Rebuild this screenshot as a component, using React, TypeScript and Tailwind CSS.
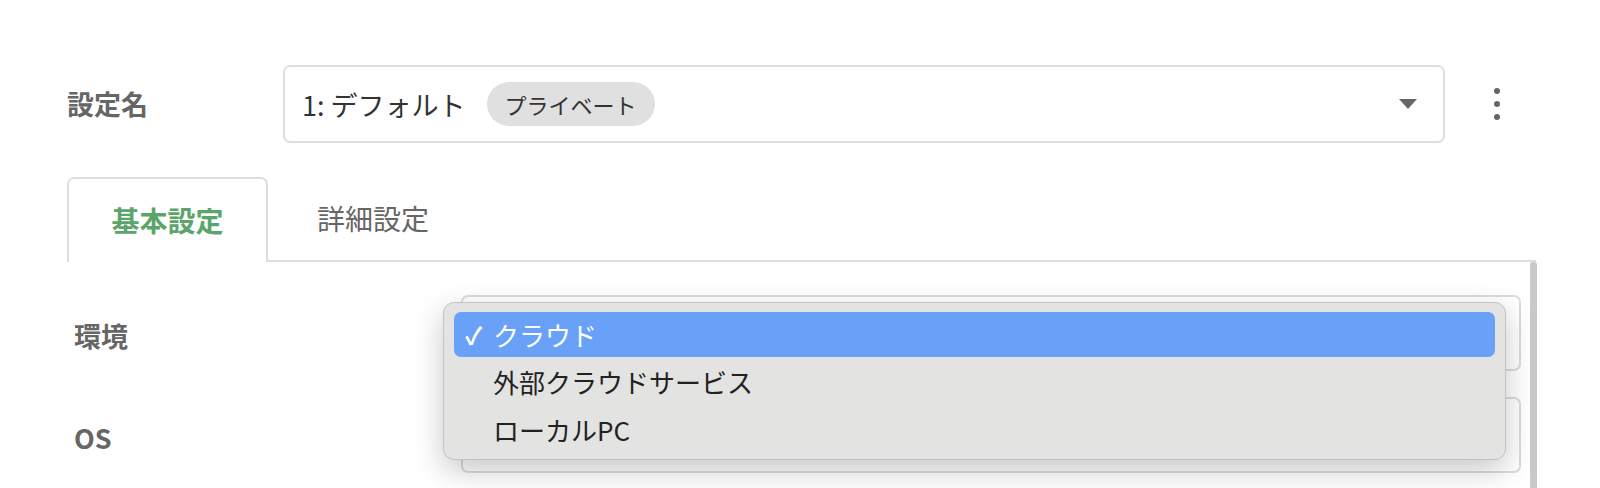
import React from "react";

const font = { fontFamily: '"Noto Sans CJK JP", "Noto Sans", sans-serif' };

export default function App() {
  return (
    <div className="relative w-[1600px] h-[488px] overflow-hidden bg-white flex flex-col" style={font}>
      {/* Row 1: setting name */}
      <div className="mt-[65px] h-[78px] flex items-center pl-[67px]">
        <div className="w-[216px] text-[27px] font-bold text-[#666]">設定名</div>
        <div className="w-[1162px] h-[78px] border-2 border-[#dedede] rounded-[7px] flex items-center pl-[17px] pr-[26px]">
          <span className="text-[27px] text-[#333] leading-none">1: デフォルト</span>
          <span className="ml-[21px] h-[44px] px-[18px] rounded-full bg-[#e0e0e0] flex items-center text-[22px] text-[#333] leading-none">
            プライベート
          </span>
          <div className="flex-1" />
          <svg width="18" height="10" viewBox="0 0 18 10">
            <path d="M0 0 H18 L9 10 Z" fill="#666" />
          </svg>
        </div>
        <div className="w-[104px] flex justify-center">
          <svg width="8" height="32" viewBox="0 0 8 32">
            <circle cx="4" cy="3" r="3" fill="#666" />
            <circle cx="4" cy="16" r="3" fill="#666" />
            <circle cx="4" cy="29" r="3" fill="#666" />
          </svg>
        </div>
      </div>

      {/* Tabs */}
      <div className="mt-[34px] h-[85px] flex pl-[67px] pr-[64px]">
        <div className="w-[201px] h-[85px] border-2 border-b-0 border-[#dedede] rounded-t-[7px] bg-white flex items-center justify-center pb-[2px]">
          <span className="text-[28px] font-bold text-[#5ba56b]">基本設定</span>
        </div>
        <div className="w-[210px] h-[85px] border-b-2 border-[#dedede] flex items-center justify-center pb-[2px]">
          <span className="text-[28px] text-[#666]">詳細設定</span>
        </div>
        <div className="flex-1 h-[85px] border-b-2 border-[#dedede]" />
      </div>

      {/* Panel */}
      <div className="flex-1 ml-[67px] w-[1470px] flex">
        <div className="flex-1 pl-[7px] pt-[33px] flex flex-col gap-[26px]">
          <div className="flex items-center h-[76px]">
            <div className="w-[387px] text-[27px] font-bold text-[#666] pt-[6px]">環境</div>
            <div className="w-[1060px] h-[76px] border-2 border-[#dcdcdc] rounded-[7px]" />
          </div>
          <div className="flex items-center h-[76px]">
            <div className="w-[387px] text-[27px] font-bold text-[#666] pt-[6px]">OS</div>
            <div className="w-[1060px] h-[76px] border-2 border-[#dcdcdc] rounded-[7px]" />
          </div>
        </div>
        <div className="w-[7px] bg-[#c9c9c9] rounded-t-[3px]" />
      </div>

      {/* Dropdown menu overlay */}
      <div className="absolute left-[443px] top-[302px] w-[1063px] h-[158px] bg-[#e3e3e2] border border-[#c4c4c4] rounded-[11px] shadow-[0_10px_30px_rgba(0,0,0,0.22)] pt-[9px] px-[10px]">
        <div className="h-[45px] rounded-[7px] bg-[#69a0f8] flex items-center pl-[11px] text-white text-[26px] leading-none">
          <span className="w-[28px] text-[24px] font-bold">✓</span>
          <span>クラウド</span>
        </div>
        <div className="mt-[1px] h-[48px] flex items-center pl-[39px] text-[#222] text-[26px] leading-none">
          外部クラウドサービス
        </div>
        <div className="h-[48px] flex items-center pl-[39px] text-[#222] text-[26px] leading-none">
          ローカルPC
        </div>
      </div>
    </div>
  );
}
